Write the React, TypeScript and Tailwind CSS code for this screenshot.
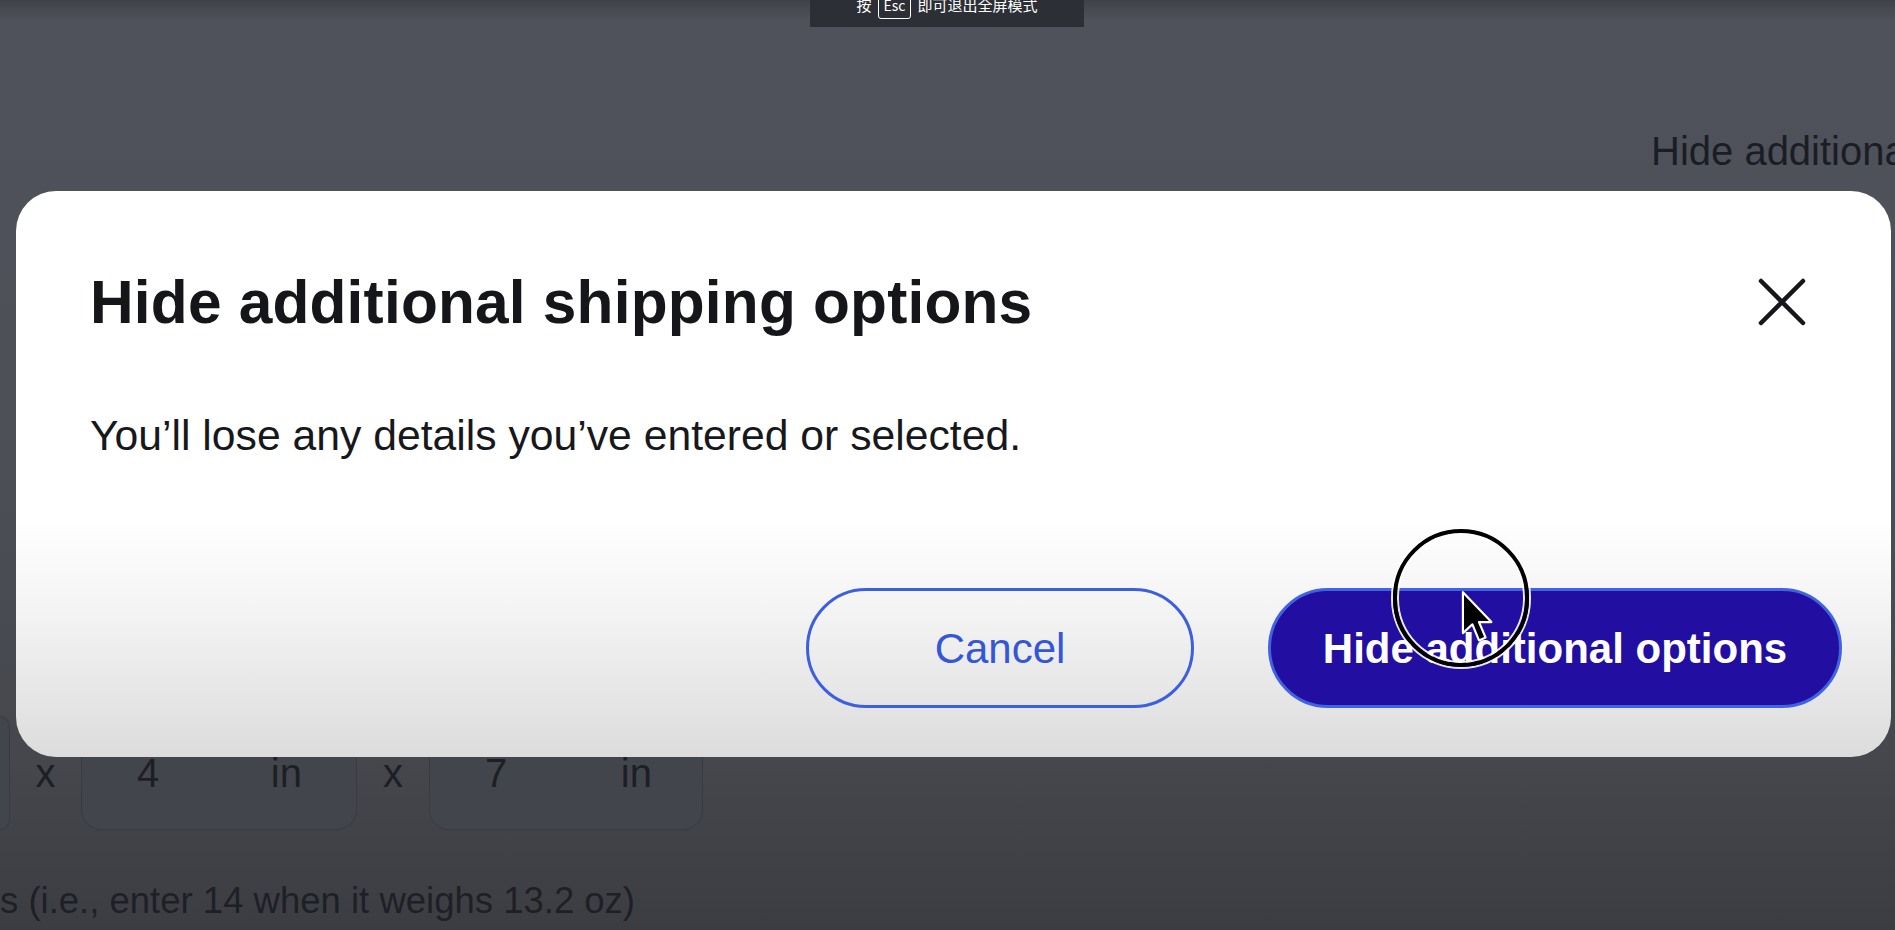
import React from 'react'

const font = { fontFamily: '"Liberation Sans", Arial, sans-serif' }

const CloseIcon = () => (
  <svg width="56" height="56" viewBox="0 0 56 56" fill="none" stroke="#16171b" strokeWidth="4.5" strokeLinecap="round">
    <path d="M7 7 L49 49 M49 7 L7 49" />
  </svg>
)

const Pointer = () => (
  <svg width="38" height="56" viewBox="0 0 26 38">
    <path d="M2 2 L2 30 L8.5 24 L13 35 L17.5 33 L13 22.5 L21.5 22.5 Z" fill="#000" stroke="#fff" strokeWidth="1.5" strokeLinejoin="round" />
  </svg>
)

type SizeBoxProps = {
  value: string
  className?: string
}

const SizeBox = ({ value, className }: SizeBoxProps) => (
  <div className={`h-[114px] rounded-[20px] border border-[#393b41] bg-[#43454c] flex items-center justify-between text-[40px] text-[#1d1f24] ${className ?? ''}`}>
    <span>{value}</span>
    <span>in</span>
  </div>
)

export default function App() {
  return (
    <div
      style={font}
      className="relative w-full h-[930px] overflow-hidden bg-[linear-gradient(to_bottom,#404248_0px,#4f525a_20px,#4d5057_420px,#45474d_760px,#3c3d42_930px)]"
    >
      {/* page behind the dialog */}
      <div className="flex flex-col">
        <div className="pt-[127px] pl-[1651px] whitespace-nowrap text-[40px] leading-[48px] text-[#1b1d24]">
          Hide additional options
        </div>
        <div className="mt-[541px] flex items-center">
          <div className="w-[10px] h-[114px] rounded-r-[20px] border border-l-0 border-[#393b41] bg-[#43454c]" />
          <span className="w-[71px] text-center text-[40px] text-[#1d1f24]">x</span>
          <SizeBox value="4" className="w-[276px] pl-[55px] pr-[54px]" />
          <span className="w-[72px] text-center text-[40px] text-[#1d1f24]">x</span>
          <SizeBox value="7" className="w-[274px] pl-[55px] pr-[50px]" />
        </div>
        <div className="mt-[48px] whitespace-nowrap text-[36.5px] leading-[46px] text-[#1e2026]">
          s (i.e., enter 14 when it weighs 13.2 oz)
        </div>
      </div>

      {/* fullscreen toast */}
      <div className="absolute left-[810px] top-[-17px] w-[274px] h-[44px] bg-[#2d2f36] flex items-center justify-center gap-[6px] text-white text-[15px] leading-[18px]" style={{ fontFamily: '"Noto Sans CJK SC", sans-serif' }}>
        <span>按</span>
        <span className="border border-white rounded-[3px] px-[5px] py-[4px] text-[14px] leading-[18px]">Esc</span>
        <span>即可退出全屏模式</span>
      </div>

      {/* dialog */}
      <div className="absolute left-[16px] top-[191px] w-[1875px] h-[566px] rounded-[40px] bg-[linear-gradient(to_bottom,#ffffff_0%,#ffffff_58%,#f3f3f3_75%,#dcdcdc_100%)] pl-[74px] pr-[49px] pt-[75px] pb-[49px] flex flex-col">
        <div className="h-[72px] flex items-center justify-between">
          <h2 className="text-[60.4px] leading-[72px] font-bold text-[#15161a] tracking-[0.2px]">Hide additional shipping options</h2>
          <button type="button" className="mr-[32px]">
            <CloseIcon />
          </button>
        </div>
        <p className="mt-[72px] text-[42.7px] leading-[50px] text-[#17181c]">
          You’ll lose any details you’ve entered or selected.
        </p>
        <div className="mt-[128px] flex justify-end gap-[74px]">
          <button type="button" className="w-[388px] h-[120px] rounded-full border-[3px] border-[#3c5fdf] text-[42px] text-[#3557d6]">
            Cancel
          </button>
          <button type="button" className="w-[574px] h-[120px] rounded-full border-[3px] border-[#3f63e2] bg-[#220ea0] text-[42px] font-bold text-white">
            Hide additional options
          </button>
        </div>
      </div>

      {/* cursor highlight */}
      <div className="absolute left-[1393px] top-[529px] w-[136px] h-[138px] rounded-full border-[4px] border-black shadow-[0_0_0_2px_rgba(255,255,255,0.9),inset_0_0_0_2px_rgba(255,255,255,0.9)]" />
      <div className="absolute left-[1460px] top-[589px]">
        <Pointer />
      </div>
    </div>
  )
}
